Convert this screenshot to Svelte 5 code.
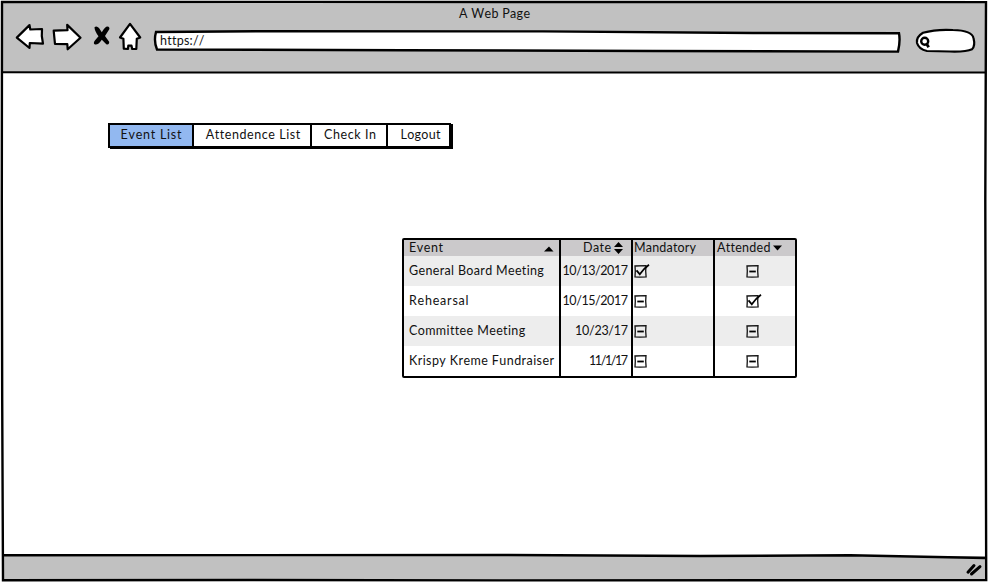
<script>
  const tabs = [
    { text: 'Event List', width: 61, cell: 84, active: true },
    { text: 'Attendence List', width: 94, cell: 118, nudge: 1 },
    { text: 'Check In', width: 52, cell: 76, nudge: 1 },
    { text: 'Logout', width: 40, cell: 65, last: true },
  ];
  const rows = [
    { name: 'General Board Meeting', nw: 135, date: '10/13/2017', dw: 65.5, mandatory: true, attended: false },
    { name: 'Rehearsal', nw: 59.5, date: '10/15/2017', dw: 65.5, mandatory: false, attended: true },
    { name: 'Committee Meeting', nw: 116, date: '10/23/17', dw: 53, mandatory: false, attended: false },
    { name: 'Krispy Kreme Fundraiser', nw: 145, date: '11/1/17', dw: 39, mandatory: false, attended: false },
  ];

  // Spreads the letters so that a label fills its sketched width.
  function fit(node, width) {
    const natural = node.getBoundingClientRect().width;
    const gap = (width - natural) / (node.textContent.length - 1);
    node.style.letterSpacing = `${gap}px`;
    node.style.marginRight = `${-gap}px`;
  }
</script>

{#snippet label(text, width)}<span class="label" use:fit={width}>{text}</span>{/snippet}

{#snippet check(on)}
  <svg class="check" width="18" height="18" viewBox="0 0 18 18">
    <path d="M2 4 13 3.6 12.7 9 13.1 14.8 7 15.1 2 14.8 2.3 9Z" fill="none" stroke="#111" stroke-width="1.3" />
    {#if on}
      <path d="M3.5 8.4 6.8 12.3Q10.5 6.8 16 2.8" fill="none" stroke="#000" stroke-width="1.8" />
    {:else}
      <path d="M4.3 9.5H10.8" stroke="#000" stroke-width="1.8" />
    {/if}
  </svg>
{/snippet}

<div class="window">
  <header>
    <div class="title">{@render label('A Web Page', 71)}</div>
    <div class="tools">
      <svg class="nav" width="150" height="44" viewBox="0 20 150 44" fill="#fff" stroke="#000" stroke-width="2.2" stroke-linejoin="round">
        <path d="M16.8 37.6 29.5 25.1 30.3 29.5 42 29 41.8 36 43 43.7 29.8 43 29.5 48Z" />
        <path d="M53.7 30.7 67.5 30.2 67.2 24.9 80.5 37.8 67.7 49.3 67.3 44.2 55 44 54.3 37Z" />
        <path d="M94.5 27.3Q96.5 25.3 99 28L101.8 32.3Q105 26.5 107.5 26.5Q110 27 109.3 29.3L105 36 109.3 42Q109 45.3 106.3 44.3L101.8 39.7Q98 45.3 95 44.5Q93 43.5 94.5 41L98.5 36.3Q94.5 31 94.5 27.3Z" fill="#000" stroke="none" />
        <path d="M130 23.8 140.2 37.5 136.8 38.7 136.3 49 132.2 49 131.5 45.7 128.3 45.5 128 49 123.8 48.7 123.4 38.7 120 37.5Z" />
      </svg>
      <div class="address">
        <svg width="748" height="24" viewBox="0 0 748 24">
          <path d="M3 3 110 2.2 390 2.4 600 4 746 4.2Q747.5 12 745 22.6L500 22 250 21.2 4 20.5Q.5 12 3 3Z" fill="#fff" stroke="#000" stroke-width="2.4" />
        </svg>
        <span class="url">{@render label('https://', 44)}</span>
      </div>
      <svg class="search" width="64" height="28" viewBox="914 27 64 28" fill="#fff" stroke="#000" stroke-width="2.2">
        <path d="M923 32.8Q936 29 953 30Q972 30.5 973.5 38Q975.5 46 972 49.2Q966 52 950 51.5L927 51Q919 49.5 917 43Q916 37 923 32.8Z" />
        <circle cx="924.7" cy="41.2" r="3.5" stroke-width="2.4" />
        <path d="M926.5 43.8 928.7 47.2" stroke-width="2.8" />
      </svg>
    </div>
  </header>

  <main>
    <nav class="tabs">
      {#each tabs as tab}
        <div class="tab" class:active={tab.active} class:nudge={tab.nudge} class:last={tab.last} style:width="{tab.cell}px">
          {@render label(tab.text, tab.width)}
        </div>
      {/each}
    </nav>

    <div class="grid">
      <div class="row head">
        <div class="c1 split">
          {@render label('Event', 34)}
          <svg width="10" height="6"><path d="M0 5.5 5 .5 9.5 5.5Z" /></svg>
        </div>
        <div class="c2 date">
          {@render label('Date', 28)}
          <svg width="9" height="12"><path d="M0 5 4.5 0 9 5ZM0 7 9 7 4.5 12Z" /></svg>
        </div>
        <div class="c3">{@render label('Mandatory', 62)}</div>
        <div class="c4 att">
          {@render label('Attended', 53)}
          <svg width="9" height="6"><path d="M0 .5H9L4.5 5.5Z" /></svg>
        </div>
      </div>
      {#each rows as row}
        <div class="row">
          <div class="c1">{@render label(row.name, row.nw)}</div>
          <div class="c2">{@render label(row.date, row.dw)}</div>
          <div class="c3">{@render check(row.mandatory)}</div>
          <div class="c4">{@render check(row.attended)}</div>
        </div>
      {/each}
    </div>
  </main>

  <footer>
    <svg width="20" height="18" viewBox="965 562 20 18" stroke="#000" stroke-width="3" stroke-linecap="round">
      <path d="M968 573.2 974 566.5M971.5 575 980 567.7" />
    </svg>
  </footer>

  <svg class="frame" width="988" height="583" fill="none" stroke="#000" stroke-width="2.4">
    <path d="M2 2 300 1.9 986 2.1 985.3 200 986.2 580 500 580.4 250 580 3 580.2 2.2 400 1.8 200Z" />
    <path d="M3 72.2 150 72.4 985 72.4" stroke-width="2" />
    <path d="M3 555.3 500 555 700 556 850 555.3 985 558" />
  </svg>
</div>

<style>
  :global(body) { margin: 0; background: #fff; }
  .window {
    position: relative;
    display: flex;
    flex-direction: column;
    box-sizing: border-box;
    width: 988px;
    height: 583px;
    padding: 2px 2px 3px;
    overflow: hidden;
    background: #fff;
    font: 12.5px/16px Lato, "Liberation Sans", sans-serif;
    font-kerning: none;
    color: #111;
  }
  svg { display: block; flex: none; }
  .frame { position: absolute; inset: 0; pointer-events: none; }
  .label { display: inline-block; white-space: pre; }
  header { height: 70px; background: #c1c1c1; }
  .title { display: flex; justify-content: center; height: 18px; padding: 4px 0 0 1px; box-sizing: border-box; }
  .tools { display: flex; margin-left: -2px; }
  .address { position: relative; margin: 9px 0 0 3px; }
  .url { position: absolute; left: 7px; top: 4px; }
  .search { margin: 7px 0 0 13px; }
  main { flex: 1; }
  .tabs {
    display: flex;
    box-sizing: border-box;
    width: 343px;
    height: 25px;
    margin: 51px 0 0 106px;
    border: 2px solid #000;
    box-shadow: 2px 1px 0 #000;
  }
  .tab {
    display: flex;
    align-items: center;
    justify-content: center;
    box-sizing: border-box;
    padding-bottom: 2px;
    border-right: 2px solid #000;
  }
  .tab.nudge { padding-left: 2px; }
  .tab.last { flex: 1; padding-left: 4px; border-right: 0; }
  .tab.active { background: #92b8f0; }
  .grid {
    box-sizing: border-box;
    width: 395px;
    height: 140px;
    margin: 90px 0 0 400px;
    border: 2px solid #000;
    border-radius: 2px;
  }
  .row { display: flex; height: 30px; }
  .row:nth-child(even) { background: #ededed; }
  .head { height: 16px; background: #cbc9cb; }
  .row > div { display: flex; align-items: center; box-sizing: border-box; border-right: 2px solid #000; }
  .row .c1 { width: 157px; padding-left: 5px; }
  .row .c2 { width: 72px; padding-right: 3px; justify-content: flex-end; }
  .row .c3 { width: 82px; padding-left: 1px; }
  .row .c4 { flex: 1; border-right: 0; justify-content: center; padding-right: 1px; }
  .check { margin: 0 0 0 -1px; }
  .head .split { justify-content: space-between; padding-right: 5px; }
  .head .split svg { margin-top: 2px; }
  .head .date { gap: 3px; padding-right: 8px; }
  .head .att { justify-content: flex-start; gap: 3px; padding-left: 2px; }
  footer { display: flex; justify-content: flex-end; height: 24px; padding: 5px 1px 0 0; box-sizing: border-box; background: #c1c1c1; }
</style>
